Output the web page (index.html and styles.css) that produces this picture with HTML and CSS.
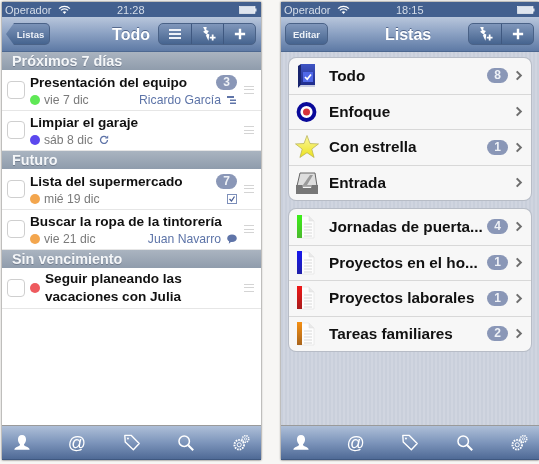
FILE: index.html
```html
<!DOCTYPE html>
<html lang="es">
<head>
    <meta charset="UTF-8">
    <meta name="viewport" content="width=device-width, initial-scale=1.0">
    <title>Todo y Listas</title>
    <link rel="stylesheet" href="styles.css">
</head>
<body>
    <svg class="defs" width="0" height="0">
        <defs>
            <linearGradient id="g-star" x1="0" y1="0" x2="0" y2="1">
                <stop offset="0" stop-color="#fbf7a0"/>
                <stop offset="1" stop-color="#ece21c"/>
            </linearGradient>
            <linearGradient id="g-book" x1="0" y1="0" x2="0" y2="1">
                <stop offset="0" stop-color="#3f55c4"/>
                <stop offset="1" stop-color="#1f2c8c"/>
            </linearGradient>
        </defs>
        <symbol id="i-quick" viewBox="0 0 18 18">
            <path d="M3.500 1 L7.500 1 L7 4.500 L10 5.500 L8 8.500 L10.500 9.500 L9.500 16.500 L6.500 10.500 L8 10 L3.500 6.500 L5.500 5 Z" fill="#fff"/>
            <path d="M11 13h6.500M14.250 9.700v6.600" stroke="#fff" stroke-width="2" fill="none"/>
        </symbol>
        <symbol id="i-plus" viewBox="0 0 14 14">
            <path d="M7 1v12M1 7h12" stroke="#fff" stroke-width="2.800" fill="none"/>
        </symbol>
        <symbol id="i-wifi" viewBox="0 0 14 10">
            <path d="M1 4a8.500 8.500 0 0 1 12 0M3 6a5.500 5.500 0 0 1 8 0" stroke="#fff" stroke-width="1.400" fill="none"/>
            <path d="M5 7.800a3 3 0 0 1 4 0L7 10Z" fill="#fff"/>
        </symbol>
        <symbol id="i-battery" viewBox="0 0 18 8">
            <rect x="0.500" y="0.500" width="15.500" height="7" fill="#dfe5ef" stroke="#fff" stroke-width="0.600"/>
            <rect x="16" y="2.500" width="1.500" height="3" fill="#dfe5ef"/>
        </symbol>
        <symbol id="i-person" viewBox="0 0 20 20">
            <path d="M10 1c3 0 4.500 2.400 4.500 5 0 2.400-1.200 4.300-2.200 5.200-.3 1.200.4 2 2.200 2.800 2 .8 3.800 1.400 4 3.500H1.500c.2-2.100 2-2.700 4-3.500 1.800-.8 2.500-1.600 2.200-2.800C6.700 10.300 5.500 8.400 5.500 6c0-2.600 1.500-5 4.500-5Z" fill="#fff"/>
        </symbol>
        <symbol id="i-tag" viewBox="0 0 20 20">
            <path d="M2 1.500h7l9 9-6.500 7-9-8.500Z" fill="none" stroke="#fff" stroke-width="1.500" stroke-linejoin="round"/>
            <circle cx="5.500" cy="5" r="1.100" fill="#fff"/>
        </symbol>
        <symbol id="i-search" viewBox="0 0 20 20">
            <circle cx="8" cy="8" r="5.800" fill="none" stroke="#fff" stroke-width="1.700"/>
            <path d="M12.500 12.500l5.500 5.500" stroke="#fff" stroke-width="2.300"/>
        </symbol>
        <symbol id="i-gears" viewBox="0 0 20 20">
            <circle cx="8" cy="12" r="5.300" fill="none" stroke="#fff" stroke-width="2.200" stroke-dasharray="1.800 1.100"/>
            <circle cx="8" cy="12" r="2.300" fill="none" stroke="#fff" stroke-width="1.100"/>
            <circle cx="15" cy="5.500" r="3.600" fill="none" stroke="#fff" stroke-width="1.800" stroke-dasharray="1.500 1"/>
            <circle cx="15" cy="5.500" r="1.300" fill="none" stroke="#fff" stroke-width="0.800"/>
        </symbol>
        <symbol id="i-chevron" viewBox="0 0 8 12">
            <path d="M1.500 1.500 L6 6 L1.500 10.500" fill="none" stroke="#6f6f6f" stroke-width="2.200"/>
        </symbol>
        <symbol id="i-note" viewBox="0 0 18 24">
            <path d="M1 1h11l5 5v17H1Z" fill="#fdfdfd" stroke="#e2e2e2" stroke-width="0.700"/>
            <path d="M12 1v5h5" fill="#e9e9e9" stroke="#dcdcdc" stroke-width="0.500"/>
            <path d="M7 9h8M7 12h8M7 15h8M7 18h8M7 21h8" stroke="#cfcfcf" stroke-width="0.800"/>
        </symbol>
    </svg>

    <main class="screens">
        <section class="phone">
            <div class="status">
                <span>Operador</span>
                <svg class="wifi"><use href="#i-wifi"/></svg>
                <span class="clock">21:28</span>
                <svg class="battery"><use href="#i-battery"/></svg>
            </div>
            <header class="navbar">
                <a class="btn back">Listas</a>
                <h1 class="title title-todo">Todo</h1>
                <div class="btn-group">
                    <a class="seg"><span class="lines"></span></a>
                    <a class="seg"><svg class="ic-quick"><use href="#i-quick"/></svg></a>
                    <a class="seg"><svg class="ic-plus"><use href="#i-plus"/></svg></a>
                </div>
            </header>

            <div class="tasks">
                <h2 class="group">Próximos 7 días</h2>
                <div class="task">
                    <span class="check"></span>
                    <div class="task-body">
                        <div class="task-top"><span class="task-name">Presentación del equipo</span><span class="count">3</span></div>
                        <div class="task-sub">
                            <i class="dot green"></i><span class="due">vie 7 dic</span>
                            <span class="who">Ricardo García</span>
                            <svg class="mini" viewBox="0 0 10 10"><path d="M0 1h7v2H0ZM3 4.500h6v1.500H3ZM3 7.500h6V9H3Z" fill="#5f74a8"/></svg>
                        </div>
                    </div>
                    <span class="grip"></span>
                </div>
                <div class="task">
                    <span class="check"></span>
                    <div class="task-body">
                        <div class="task-top"><span class="task-name">Limpiar el garaje</span></div>
                        <div class="task-sub">
                            <i class="dot violet"></i><span class="due">sáb 8 dic</span>
                            <svg class="mini repeat" viewBox="0 0 10 10"><path d="M8.500 5a3.500 3.500 0 1 1-1-2.500" fill="none" stroke="#5f74a8" stroke-width="1.300"/><path d="M6 3.500h3.200V.5Z" fill="#5f74a8"/></svg>
                        </div>
                    </div>
                    <span class="grip"></span>
                </div>

                <h2 class="group">Futuro</h2>
                <div class="task">
                    <span class="check"></span>
                    <div class="task-body">
                        <div class="task-top"><span class="task-name">Lista del supermercado</span><span class="count">7</span></div>
                        <div class="task-sub">
                            <i class="dot orange"></i><span class="due">mié 19 dic</span>
                            <span class="who"></span>
                            <svg class="mini" viewBox="0 0 10 10"><rect x="0.500" y="0.500" width="9" height="9" fill="#fff" stroke="#7d8fba"/><path d="M2.500 5l2 2 3-4.500" fill="none" stroke="#4a5f96" stroke-width="1.300"/></svg>
                        </div>
                    </div>
                    <span class="grip"></span>
                </div>
                <div class="task">
                    <span class="check"></span>
                    <div class="task-body">
                        <div class="task-top"><span class="task-name">Buscar la ropa de la tintorería</span></div>
                        <div class="task-sub">
                            <i class="dot orange"></i><span class="due">vie 21 dic</span>
                            <span class="who">Juan Navarro</span>
                            <svg class="mini" viewBox="0 0 10 10"><path d="M5 .5c2.700 0 4.800 1.600 4.800 3.700S7.700 8 5 8c-.4 0-.8 0-1.100-.1L1.800 9.700l.3-2.400C.9 6.600.2 5.500.2 4.200.2 2.100 2.300.5 5 .5Z" fill="#5f74a8"/></svg>
                        </div>
                    </div>
                    <span class="grip"></span>
                </div>

                <h2 class="group">Sin vencimiento</h2>
                <div class="task">
                    <span class="check"></span>
                    <i class="dot red solo"></i>
                    <div class="task-body task-body-solo">
                        <div class="task-name wrap">Seguir planeando las vacaciones con Julia</div>
                    </div>
                    <span class="grip"></span>
                </div>
            </div>

            <nav class="tabbar">
                <svg><use href="#i-person"/></svg>
                <span class="at">@</span>
                <svg><use href="#i-tag"/></svg>
                <svg><use href="#i-search"/></svg>
                <svg><use href="#i-gears"/></svg>
            </nav>
        </section>

        <section class="phone">
            <div class="status">
                <span>Operador</span>
                <svg class="wifi"><use href="#i-wifi"/></svg>
                <span class="clock">18:15</span>
                <svg class="battery"><use href="#i-battery"/></svg>
            </div>
            <header class="navbar">
                <a class="btn edit">Editar</a>
                <h1 class="title title-lists">Listas</h1>
                <div class="btn-group">
                    <a class="seg"><svg class="ic-quick"><use href="#i-quick"/></svg></a>
                    <a class="seg"><svg class="ic-plus"><use href="#i-plus"/></svg></a>
                </div>
            </header>

            <div class="lists">
                <div class="card">
                    <div class="list-row">
                        <span class="thumb">
                            <svg viewBox="0 0 24 26"><path d="M6 1h14v21H6Z" fill="url(#g-book)"/><path d="M3 3l3-2v21l-3 3Z" fill="#18246e"/><path d="M3 25l3-3h14v2H6Z" fill="#c9cde0"/><rect x="8" y="9" width="10" height="10" fill="#4f68e8"/><path d="M10 14l2.200 2.300 3.800-4.800" fill="none" stroke="#fff" stroke-width="1.700"/></svg>
                        </span>
                        <span class="list-name">Todo</span><span class="count">8</span>
                        <svg class="chevron"><use href="#i-chevron"/></svg>
                    </div>
                    <div class="list-row">
                        <span class="thumb">
                            <svg viewBox="0 0 24 26"><circle cx="11.500" cy="13" r="8" fill="#fff" stroke="#0a0a9a" stroke-width="3.800"/><circle cx="11.500" cy="13" r="3.500" fill="#d8323a"/></svg>
                        </span>
                        <span class="list-name">Enfoque</span>
                        <svg class="chevron"><use href="#i-chevron"/></svg>
                    </div>
                    <div class="list-row">
                        <span class="thumb">
                            <svg viewBox="0 0 24 26"><path d="M12 1.500l3 8 8.500.4-6.700 5.200 2.300 8.400L12 18.700l-7.100 4.800 2.300-8.400L.5 9.900 9 9.500Z" fill="url(#g-star)" stroke="#b3ad52" stroke-width="0.700"/></svg>
                        </span>
                        <span class="list-name">Con estrella</span><span class="count">1</span>
                        <svg class="chevron"><use href="#i-chevron"/></svg>
                    </div>
                    <div class="list-row">
                        <span class="thumb">
                            <svg viewBox="0 0 24 26"><path d="M5 3h15l2 13H2Z" fill="#dedede" stroke="#666"/><path d="M8 15L15 5h3l-6 10Z" fill="#9a9a9a"/><path d="M1 15h6l1 3h8l1-3h6v9H1Z" fill="#777"/></svg>
                        </span>
                        <span class="list-name">Entrada</span>
                        <svg class="chevron"><use href="#i-chevron"/></svg>
                    </div>
                </div>

                <div class="card">
                    <div class="list-row">
                        <span class="thumb note"><svg><use href="#i-note"/></svg><i class="band band-green"></i></span>
                        <span class="list-name">Jornadas de puerta...</span><span class="count">4</span>
                        <svg class="chevron"><use href="#i-chevron"/></svg>
                    </div>
                    <div class="list-row">
                        <span class="thumb note"><svg><use href="#i-note"/></svg><i class="band band-blue"></i></span>
                        <span class="list-name">Proyectos en el ho...</span><span class="count">1</span>
                        <svg class="chevron"><use href="#i-chevron"/></svg>
                    </div>
                    <div class="list-row">
                        <span class="thumb note"><svg><use href="#i-note"/></svg><i class="band band-red"></i></span>
                        <span class="list-name">Proyectos laborales</span><span class="count">1</span>
                        <svg class="chevron"><use href="#i-chevron"/></svg>
                    </div>
                    <div class="list-row">
                        <span class="thumb note"><svg><use href="#i-note"/></svg><i class="band band-orange"></i></span>
                        <span class="list-name">Tareas familiares</span><span class="count">2</span>
                        <svg class="chevron"><use href="#i-chevron"/></svg>
                    </div>
                </div>
            </div>

            <nav class="tabbar">
                <svg><use href="#i-person"/></svg>
                <span class="at">@</span>
                <svg><use href="#i-tag"/></svg>
                <svg><use href="#i-search"/></svg>
                <svg><use href="#i-gears"/></svg>
            </nav>
        </section>
    </main>
</body>
</html>
```

FILE: styles.css
```css
* {
    box-sizing: border-box;
}

body {
    margin: 0;
    height: 464px;
    overflow: hidden;
    background-color: #f7f6f4;
    font-family: "Liberation Sans", Arial, sans-serif;
    color: #111;
}

.defs {
    position: absolute;
}

.screens {
    display: flex;
    gap: 20px;
    padding: 2px 0 0 2px;
}

.phone {
    width: 259px;
    height: 458px;
    display: flex;
    flex-direction: column;
    flex: none;
    background: #fff;
    box-shadow: 0 0 2px rgba(0, 0, 0, 0.7);
    filter: blur(0.3px);
}

.phone + .phone {
    width: 258px;
}

/* status bar */
.status {
    height: 15px;
    display: flex;
    align-items: center;
    padding: 0 3px;
    background: #43608f;
    color: #d6deea;
    font-size: 11px;
    position: relative;
}

.wifi {
    width: 13px;
    height: 9px;
    margin-left: 7px;
}

.clock {
    position: absolute;
    left: 115px;
}

.battery {
    width: 18px;
    height: 8px;
    margin-left: auto;
    margin-right: 1px;
}

/* nav bar */
.navbar {
    height: 35px;
    display: flex;
    align-items: center;
    padding: 0 5px 0 4px;
    background: linear-gradient(#b8c6dc, #8aa0c2 50%, #5e7aa5);
    border-bottom: 1px solid #4d6890;
}

.title {
    margin: 2px 0 0;
    font-size: 16px;
    font-weight: bold;
    color: #fff;
    text-shadow: 0 -1px 0 rgba(40, 60, 100, 0.6);
}

.title-todo {
    margin-left: auto;
    margin-right: 8px;
}

.title-lists {
    margin-left: 57px;
    margin-right: auto;
}

.btn {
    height: 22px;
    display: flex;
    align-items: center;
    justify-content: center;
    font-size: 9.5px;
    font-weight: bold;
    color: #eef2f8;
    background: linear-gradient(#8097bb, #46648f);
    border: 1px solid #4a6287;
    border-radius: 5px;
}

.back {
    width: 44px;
    padding-left: 6px;
    border-left: none;
    clip-path: polygon(8px 0, 100% 0, 100% 100%, 8px 100%, 0 50%);
    background: linear-gradient(#7b93b8, #46648f);
}

.edit {
    width: 43px;
}

.btn-group {
    height: 22px;
    display: flex;
    background: linear-gradient(#8097bb, #46648f);
    border: 1px solid #4a6287;
    border-radius: 5px;
}

.seg {
    width: 32px;
    display: flex;
    align-items: center;
    justify-content: center;
    border-left: 1px solid #3f5880;
}

.seg:first-child {
    border-left: none;
}

.lines {
    width: 12px;
    height: 10px;
    border-top: 2px solid #eef2f8;
    border-bottom: 2px solid #eef2f8;
    background: linear-gradient(#eef2f8, #eef2f8) center / 100% 2px no-repeat;
}

.ic-quick {
    width: 16px;
    height: 16px;
}

.ic-plus {
    width: 12px;
    height: 12px;
}

/* task list */
.tasks {
    flex: 1;
    background: #fff;
}

.group {
    height: 18px;
    margin: 0;
    padding-left: 10px;
    font-size: 14.4px;
    font-weight: bold;
    line-height: 19px;
    color: #f4f6f8;
    background: linear-gradient(#aab4c0, #8f9cac);
    text-shadow: 0 1px 0 rgba(80, 90, 110, 0.5);
}

.task {
    height: 40.500px;
    display: flex;
    align-items: center;
    padding: 0 7px 0 5px;
    border-bottom: 1px solid #e6e6e6;
}

.check {
    flex: none;
    width: 18px;
    height: 18px;
    background: #fff;
    border: 1px solid #cfcfcf;
    border-radius: 4px;
}

.task-body {
    flex: 1;
    min-width: 0;
    padding-left: 5px;
    padding-top: 1.500px;
}

.task-body-solo {
    padding-top: 0;
}

.task-top {
    height: 18px;
    display: flex;
    align-items: center;
    justify-content: space-between;
}

.task-name {
    font-size: 13.6px;
    font-weight: bold;
    line-height: 18px;
    white-space: nowrap;
}

.task-name.wrap {
    white-space: normal;
    width: 170px;
}

.task-sub {
    height: 16px;
    display: flex;
    align-items: center;
    font-size: 12.2px;
    color: #7a7a7a;
}

.dot {
    flex: none;
    width: 10px;
    height: 10px;
    border-radius: 50%;
    margin-right: 4px;
}

.dot.solo {
    margin: 0 0 0 5px;
}

.green { background: #5fe856; }
.violet { background: #5b48ee; }
.orange { background: #f3a64e; }
.red { background: #ee5a5e; }

.who {
    margin-left: auto;
    color: #5d74a8;
}

.mini {
    flex: none;
    width: 10px;
    height: 10px;
    margin-left: 6px;
}

.count {
    flex: none;
    width: 21px;
    height: 15px;
    font-size: 12px;
    font-weight: bold;
    line-height: 15px;
    text-align: center;
    color: #eef1f6;
    background: #8a97b7;
    border-radius: 8px;
}

.grip {
    flex: none;
    width: 10px;
    height: 8px;
    margin-left: 7px;
    border-top: 1px solid #d4d4d4;
    border-bottom: 1px solid #d4d4d4;
    background: linear-gradient(#d4d4d4, #d4d4d4) center / 100% 1px no-repeat;
}

/* tab bar */
.tabbar {
    height: 35px;
    display: flex;
    align-items: center;
    justify-content: space-between;
    padding: 0 11px;
    background: linear-gradient(#aebfd8, #7d95bb 50%, #4f6a96);
    border-top: 1px solid #9a9a9a;
    border-bottom: 1px solid #3f5880;
}

.tabbar svg {
    width: 18px;
    height: 18px;
}

.at {
    width: 18px;
    font-size: 18px;
    line-height: 20px;
    text-align: center;
    color: #fff;
}

/* lists screen */
.lists {
    flex: 1;
    display: flex;
    flex-direction: column;
    gap: 9px;
    padding: 6px 8px 0;
    background: #c9cfdb repeating-linear-gradient(90deg, #c9cfdb 0 2px, #d0d5e0 2px 4px);
}

.card {
    background: #f7f7f7;
    box-shadow: 0 0 0 1px #b7bcc6;
    border-radius: 7px;
}

.list-row {
    height: 35.500px;
    display: flex;
    align-items: center;
    padding-right: 8px;
    border-top: 1px solid #d8d8d8;
}

.list-row:first-child {
    border-top: none;
}

.thumb {
    flex: none;
    width: 24px;
    height: 26px;
    margin-left: 6px;
    margin-right: 10px;
    position: relative;
}

.thumb svg {
    display: block;
    width: 24px;
    height: 26px;
}

.thumb.note svg {
    width: 18px;
    height: 24px;
    margin: 1px 0 0 2px;
}

.band {
    position: absolute;
    left: 2px;
    top: 1px;
    width: 5px;
    height: 23px;
}

.band-green { background: linear-gradient(#3cf018, #4bb82e); }
.band-blue { background: linear-gradient(#1818ee, #2020a8); }
.band-red { background: linear-gradient(#f01818, #a81c1c); }
.band-orange { background: linear-gradient(#f59014, #a8641c); }

.list-name {
    flex: 1;
    min-width: 0;
    font-size: 15.3px;
    font-weight: bold;
    white-space: nowrap;
}

.chevron {
    flex: none;
    width: 8px;
    height: 11px;
    margin-left: 7px;
}
```
